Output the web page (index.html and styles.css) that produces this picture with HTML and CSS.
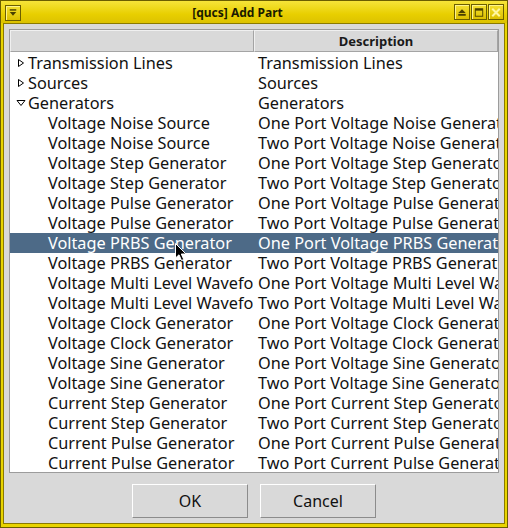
FILE: index.html
```html
<!DOCTYPE html>
<html>
<head>
<meta charset="utf-8">
<link rel="stylesheet" href="styles.css">
</head>
<body>
<div class="window">
  <div class="titlebar">
    <div class="tbtn tbtn-menu">
      <svg width="15" height="15" viewBox="0 0 15 15"><rect x="4" y="4" width="7" height="1.5" fill="#4a4000"/><path d="M4 7 L11 7 L7.5 11 Z" fill="#4a4000"/></svg>
    </div>
    <div class="title">[qucs] Add Part</div>
    <div class="tbtns">
      <div class="tbtn"><svg width="15" height="15" viewBox="0 0 15 15"><path d="M3.5 8 L11.5 8 L7.5 4 Z" fill="#4a4000"/><rect x="3.5" y="9" width="8" height="2" fill="#4a4000"/></svg></div>
      <div class="tbtn"><svg width="15" height="15" viewBox="0 0 15 15"><rect x="3.5" y="3.5" width="8" height="8" fill="none" stroke="#4a4000" stroke-width="1"/><rect x="3.5" y="3.5" width="8" height="2" fill="#4a4000"/></svg></div>
      <div class="tbtn"><svg width="15" height="15" viewBox="0 0 15 15"><path d="M3.5 3.5 L11.5 11.5 M11.5 3.5 L3.5 11.5" stroke="#fff6a0" stroke-width="2.2"/></svg></div>
    </div>
  </div>
  <div class="client">
    <div class="tree">
      <div class="header">
        <div class="hcell hcell-name"></div>
        <div class="hcell hcell-desc">Description</div>
      </div>
      <div class="rows">
        <div class="row"><div class="c1 lvl0"><svg class="arrow" width="8" height="10" viewBox="0 0 8 10"><path d="M1.5 1.5 L6.5 5 L1.5 8.5 Z" fill="none" stroke="#000" stroke-width="1"/></svg>Transmission Lines</div><div class="c2">Transmission Lines</div></div>
        <div class="row"><div class="c1 lvl0"><svg class="arrow" width="8" height="10" viewBox="0 0 8 10"><path d="M1.5 1.5 L6.5 5 L1.5 8.5 Z" fill="none" stroke="#000" stroke-width="1"/></svg>Sources</div><div class="c2">Sources</div></div>
        <div class="row"><div class="c1 lvl0"><svg class="arrow arrow-down" width="10" height="8" viewBox="0 0 10 8"><path d="M1 1.5 L9 1.5 L5 6.5 Z" fill="none" stroke="#000" stroke-width="1"/></svg>Generators</div><div class="c2">Generators</div></div>
        <div class="row"><div class="c1 lvl1">Voltage Noise Source</div><div class="c2">One Port Voltage Noise Generator</div></div>
        <div class="row"><div class="c1 lvl1">Voltage Noise Source</div><div class="c2">Two Port Voltage Noise Generator</div></div>
        <div class="row"><div class="c1 lvl1">Voltage Step Generator</div><div class="c2">One Port Voltage Step Generator</div></div>
        <div class="row"><div class="c1 lvl1">Voltage Step Generator</div><div class="c2">Two Port Voltage Step Generator</div></div>
        <div class="row"><div class="c1 lvl1">Voltage Pulse Generator</div><div class="c2">One Port Voltage Pulse Generator</div></div>
        <div class="row"><div class="c1 lvl1">Voltage Pulse Generator</div><div class="c2">Two Port Voltage Pulse Generator</div></div>
        <div class="row selected"><div class="c1 lvl1">Voltage PRBS Generator</div><div class="c2">One Port Voltage PRBS Generator</div></div>
        <div class="row"><div class="c1 lvl1">Voltage PRBS Generator</div><div class="c2">Two Port Voltage PRBS Generator</div></div>
        <div class="row"><div class="c1 lvl1">Voltage Multi Level Waveform Generator</div><div class="c2">One Port Voltage Multi Level Waveform Generator</div></div>
        <div class="row"><div class="c1 lvl1">Voltage Multi Level Waveform Generator</div><div class="c2">Two Port Voltage Multi Level Waveform Generator</div></div>
        <div class="row"><div class="c1 lvl1">Voltage Clock Generator</div><div class="c2">One Port Voltage Clock Generator</div></div>
        <div class="row"><div class="c1 lvl1">Voltage Clock Generator</div><div class="c2">Two Port Voltage Clock Generator</div></div>
        <div class="row"><div class="c1 lvl1">Voltage Sine Generator</div><div class="c2">One Port Voltage Sine Generator</div></div>
        <div class="row"><div class="c1 lvl1">Voltage Sine Generator</div><div class="c2">Two Port Voltage Sine Generator</div></div>
        <div class="row"><div class="c1 lvl1">Current Step Generator</div><div class="c2">One Port Current Step Generator</div></div>
        <div class="row"><div class="c1 lvl1">Current Step Generator</div><div class="c2">Two Port Current Step Generator</div></div>
        <div class="row"><div class="c1 lvl1">Current Pulse Generator</div><div class="c2">One Port Current Pulse Generator</div></div>
        <div class="row"><div class="c1 lvl1">Current Pulse Generator</div><div class="c2">Two Port Current Pulse Generator</div></div>
      </div>
      <svg class="cursor" width="12" height="19" viewBox="0 0 12 19"><path d="M0.5 0.5 L0.5 15 L4 11.8 L6.5 17.5 L8.8 16.5 L6.3 11 L11 11 Z" fill="#000" stroke="#fff" stroke-width="1"/></svg>
    </div>
    <div class="buttons">
      <button class="btn">OK</button>
      <button class="btn">Cancel</button>
    </div>
  </div>
</div>
</body>
</html>
```

FILE: styles.css
```css
* { box-sizing: border-box; }
html, body { margin: 0; padding: 0; }
body {
  width: 508px;
  height: 528px;
  overflow: hidden;
  font-family: "Noto Sans", "DejaVu Sans", sans-serif;
}
.window {
  width: 508px;
  height: 528px;
  border: 1px solid #6b5e00;
  background: #e9d400;
  padding: 0 2px 3px 2px;
  display: flex;
  flex-direction: column;
}
.titlebar {
  height: 22px;
  margin: 0 -2px;
  padding: 0 3px;
  background: linear-gradient(#f6e43a, #e8cf00 60%, #dcc200);
  display: flex;
  align-items: center;
  position: relative;
}
.title {
  flex: 1;
  text-align: center;
  font-weight: bold;
  font-size: 12px;
  color: #1a1a00;
  padding-top: 1px;
}
.tbtns {
  display: flex;
  gap: 1px;
}
.tbtn {
  width: 16px;
  height: 16px;
  border: 1px solid #6b5e00;
  background: linear-gradient(#f4e030, #dcc000);
  box-shadow: inset 1px 1px 0 #fff48a;
  display: flex;
  align-items: center;
  justify-content: center;
}
.tbtn svg { display: block; }
.tbtn-menu { margin-left: 1px; margin-top: 1px; }
.client {
  flex: 1;
  border: 1px solid #8a7a00;
  background: #d9d9d9;
  padding: 5px 5px 5px 5px;
  display: flex;
  flex-direction: column;
}
.tree {
  height: 444px;
  border: 1px solid #9c9c9c;
  background: #fff;
  overflow: hidden;
  position: relative;
  display: flex;
  flex-direction: column;
}
.header {
  display: flex;
  height: 23px;
  flex: none;
  background: #fff;
  padding-bottom: 1px;
}
.hcell {
  background: #d9d9d9;
  border: 1px solid #a4a4a4;
  border-top-color: #f0f0f0;
  border-left-color: #f0f0f0;
  font-weight: bold;
  font-size: 13px;
  text-align: center;
  line-height: 20px;
  color: #1a1a1a;
}
.hcell-name { width: 244px; }
.hcell-desc { flex: 1; }
.rows { display: flex; flex-direction: column; }
.row {
  display: flex;
  height: 20px;
  line-height: 20px;
  font-size: 16.3px;
  color: #111;
  flex: none;
}
.row.selected { background: #4d6a87; color: #fff; }
.c1 {
  width: 243px;
  flex: none;
  white-space: nowrap;
  overflow: hidden;
  display: flex;
  align-items: center;
}
.c2 {
  flex: 1;
  padding-left: 5px;
  white-space: nowrap;
  overflow: hidden;
}
.lvl0 { padding-left: 7px; }
.lvl1 { padding-left: 38px; }
.arrow { margin-right: 3px; flex: none; }
.arrow-down { margin-left: -1px; margin-right: 2px; }
.cursor {
  position: absolute;
  left: 165px;
  top: 213px;
}
.buttons {
  margin-top: 11px;
  display: flex;
  justify-content: center;
  gap: 12px;
}
.btn {
  width: 116px;
  height: 34px;
  font-family: "Noto Sans", "DejaVu Sans", sans-serif;
  font-size: 16px;
  color: #111;
  background: #d9d9d9;
  border: 1px solid;
  border-color: #ffffff #8c8c8c #8c8c8c #ffffff;
  padding: 0;
}
```
